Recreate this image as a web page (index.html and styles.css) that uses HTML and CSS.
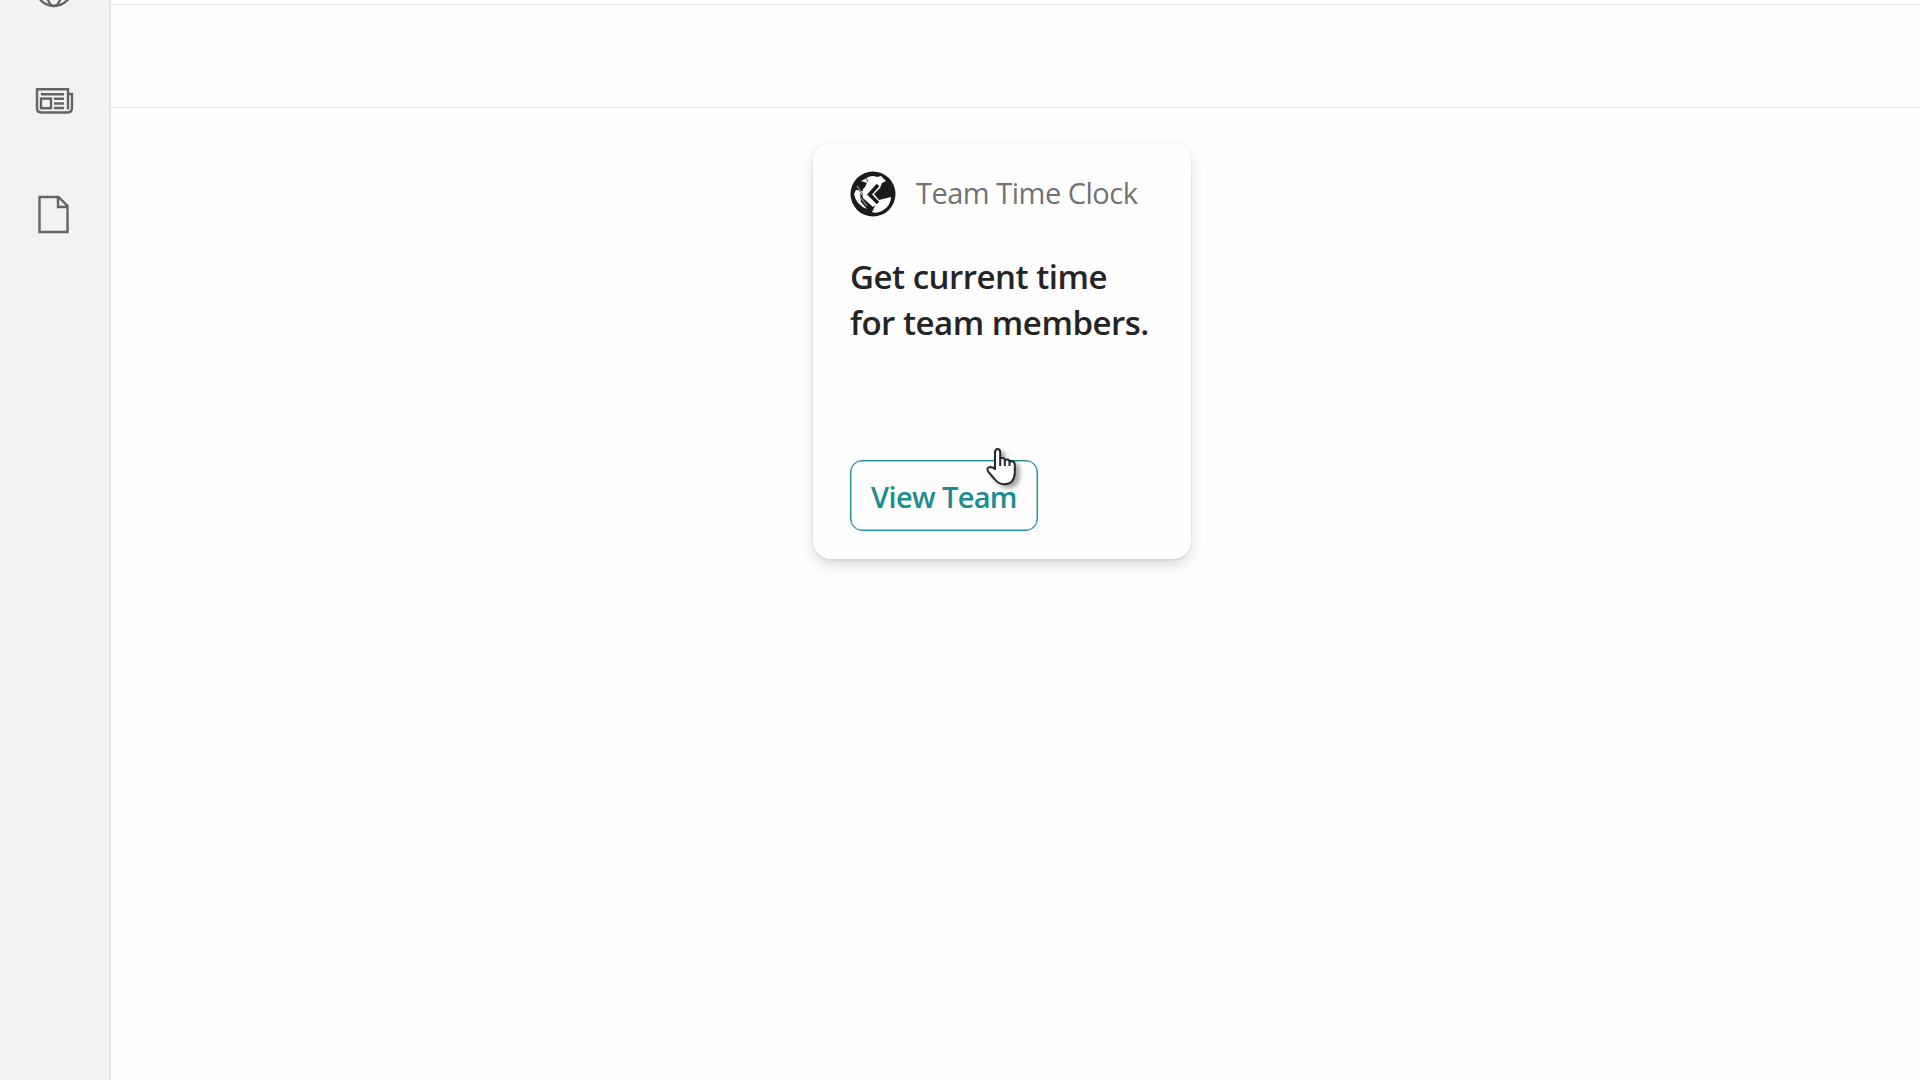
FILE: index.html
```html
<!DOCTYPE html>
<html lang="en">
<head>
<meta charset="utf-8">
<title>Team Time Clock</title>
<link rel="stylesheet" href="styles.css">
</head>
<body>
<nav class="sidebar">
  <svg class="icon globe" width="40" height="40" viewBox="0 0 40 40"><circle cx="20" cy="20" r="18"/><ellipse cx="20" cy="20" rx="8" ry="18"/><path d="M4 13H36M4 27H36"/></svg>
  <svg class="icon news" width="40" height="28" viewBox="0 0 40 28"><path d="M33 22.5V2.2H2V21.5Q2 25.5 6.5 25.5H32.5Q37 25.5 37 20.5V7H33M6 7.3H29"/><rect x="6" y="11.6" width="10" height="9.6"/><path d="M19 11.8H29M19 16.5H29M19 21H29"/></svg>
  <svg class="icon page" width="32" height="40" viewBox="0 0 32 40"><path d="M2.5 2H21.5L30.5 11V37H2.5ZM21 2V12H30.5"/></svg>
</nav>
<main class="main">
  <div class="header"></div>
  <div class="toolbar"></div>
  <section class="content">
    <article class="card">
      <header class="card-header">
        <svg class="logo" width="46" height="46" viewBox="0 0 46 46">
          <circle cx="23" cy="23" r="22.5" fill="#1b1b1b"/>
          <path fill="#fff" d="M15 8Q21 3.5 27 6L31 5L36 10L32 12L30 17L24 23L29 29L41 26Q41 35 32 40Q26 43 22 41L25 35L16 29L10 22L11 31L17 38Q6 34 4 23L6 19L13 20L17 12L11 10Z"/>
          <path fill="#fff" d="M13 18L22 11L29 13L22 23L28 31L23 36L13 27Z"/>
          <path d="M28 14L19.5 23.5L28 32" fill="none" stroke="#1b1b1b" stroke-width="3.6"/>
          <path d="M7 15L13 24M11 27L17 35M16 7L18 11" fill="none" stroke="#777" stroke-width="1.5"/>
        </svg>
        <span class="app-name">Team Time Clock</span>
      </header>
      <h1 class="title">Get current time<br>for team members.</h1>
      <button class="action">View Team</button>
      <svg class="cursor" width="36" height="44" viewBox="0 0 36 44"><path d="M9 22V5.5Q9 2 11.6 2Q14.2 2 14.2 5.5V11.3Q18.6 10 18.8 13Q23.2 11.7 23.5 14.5Q28.8 13 28.8 18V26Q28.3 37 18.5 37.3Q12.5 37.2 8.5 32L2.2 24.7Q0 20.5 4 20Q7 20 9 22Z"/><path d="M14.2 10.5V19M18.8 12V19M23.5 13.5V19"/></svg>
    </article>
  </section>
</main>
</body>
</html>
```
FILE: styles.css
```css
* { box-sizing: border-box; }
body {
  margin: 0;
  height: 1080px;
  display: flex;
  overflow: hidden;
  background: #fefefd;
  font-family: "Open Sans", "Noto Sans", sans-serif;
}
.sidebar {
  width: 111px;
  flex: none;
  background: #f3f2f1;
  border-right: 2px solid #e3e2e1;
}
.icon {
  display: block;
  fill: none;
  stroke: #656462;
  stroke-width: 2.4;
}
.globe { margin: -32px 0 0 34px; }
.news { margin: 79px 0 0 35px; }
.page { margin: 80px 0 0 37px; }
.main { flex: 1; }
.header { height: 5px; border-bottom: 1px solid #e6e6e5; }
.toolbar { height: 103px; border-bottom: 1px solid #e6e6e5; }
.content { padding: 35px 0 0 702px; }
.card {
  position: relative;
  width: 378px;
  height: 416px;
  padding: 28px 30px 0 37px;
  border-radius: 18px;
  background: #fefefe;
  box-shadow: 0 6px 13px rgba(0, 0, 0, .14), 0 1px 3px rgba(0, 0, 0, .08);
}
.card-header {
  display: flex;
  align-items: center;
  gap: 20px;
  height: 46px;
}
.logo { flex: none; }
.app-name {
  margin-top: -3px;
  color: #727272;
  font-size: 29px;
  line-height: 40px;
  letter-spacing: -.5px;
  white-space: nowrap;
}
.title {
  margin: 37px 0 0;
  height: 92px;
  color: #242424;
  font-size: 33px;
  font-weight: 550;
  line-height: 46px;
  letter-spacing: -.48px;
  white-space: nowrap;
}
.action {
  display: block;
  width: 188px;
  height: 71px;
  margin-top: 114px;
  padding: 2px 0 0;
  border: 1px solid #1f9296;
  border-radius: 12px;
  background: transparent;
  box-shadow: inset 0 0 0 .5px #37a0a4;
  color: #1b8c90;
  font: 600 29px "Open Sans", "Noto Sans", sans-serif;
  letter-spacing: -.65px;
}
.cursor {
  position: absolute;
  left: 173px;
  top: 304px;
  fill: #fff;
  stroke: #25252d;
  stroke-width: 2;
  stroke-linejoin: round;
  overflow: visible;
  filter: drop-shadow(4px 3px 2px rgba(0, 0, 0, .35));
}
```
